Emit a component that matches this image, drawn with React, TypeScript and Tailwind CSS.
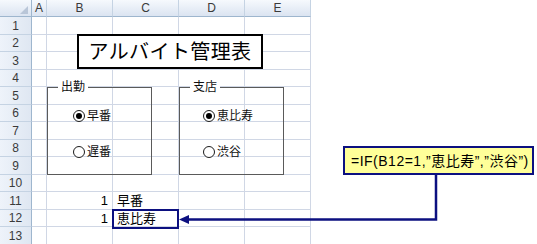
import React from 'react';

const cols = ['A', 'B', 'C', 'D', 'E'];
const rows = Array.from({ length: 13 }, (_, i) => i + 1);

const cellText: Record<string, string> = {
  '11-B': '1',
  '11-C': '早番',
  '12-B': '1',
  '12-C': '恵比寿',
};

const jp = { fontFamily: '"Liberation Sans", "Noto Sans CJK JP", sans-serif' };

const Radio: React.FC<{ label: string; checked?: boolean }> = ({ label, checked }) => (
  <div className="flex h-[14px] items-center gap-[2px] text-[12px] leading-none text-[#111]">
    <span className="flex h-[12px] w-[12px] items-center justify-center rounded-full border-[1.5px] border-[#1c1c1c] bg-white">
      {checked && <span className="h-[6px] w-[6px] rounded-full bg-black" />}
    </span>
    <span>{label}</span>
  </div>
);

const GroupBox: React.FC<{ title: string; options: string[]; left: string; pad: string }> = ({ title, options, left, pad }) => (
  <div className={`absolute top-[87px] h-[88px] w-[105px] border border-[#5a5a5a] ${left}`}>
    <span className="absolute -top-[8px] left-[10px] bg-white px-[3px] text-[12px] leading-[14px] text-[#111]">{title}</span>
    <div className={`flex flex-col gap-[22px] pt-[21px] ${pad}`}>
      {options.map((o, i) => (
        <Radio key={o} label={o} checked={i === 0} />
      ))}
    </div>
  </div>
);

export default function App() {
  return (
    <div className="relative h-[244px] w-[537px] overflow-hidden bg-white" style={jp}>
      <div className="grid w-[311px] grid-cols-[32px_15px_66px_66px_66px_66px] grid-rows-[17px_18px_17px_18px_17px_18px_17px_18px_17px_18px_17px_18px_17px_18px]">
        {/* corner */}
        <div className="relative border-r border-b border-[#9eb6ce] bg-gradient-to-b from-[#f6f9fd] to-[#dbe4f1]">
          <span className="absolute right-[3px] bottom-[2px] h-0 w-0 border-b-[8px] border-l-[8px] border-b-[#b9c6d8] border-l-transparent" />
        </div>
        {cols.map(c => (
          <div
            key={c}
            className="flex items-center justify-center border-r border-b border-r-[#c5d3e3] border-b-[#9eb6ce] bg-gradient-to-b from-[#f6f9fd] to-[#dbe4f1] text-[12px] leading-none text-[#3a3a3a]"
            style={{ fontFamily: '"Liberation Sans", sans-serif' }}
          >
            {c}
          </div>
        ))}
        {rows.map(r => (
          <React.Fragment key={r}>
            <div
              className="flex items-center justify-center border-r border-b border-r-[#9eb6ce] border-b-[#c5d3e3] bg-gradient-to-r from-[#eef3fa] to-[#dfe7f2] text-[12px] leading-none text-[#3a3a3a]"
              style={{ fontFamily: '"Liberation Sans", sans-serif' }}
            >
              {r}
            </div>
            {cols.map(c => {
              const t = cellText[`${r}-${c}`];
              const num = t !== undefined && /^\d+$/.test(t);
              return (
                <div
                  key={c}
                  className={`flex items-center border-r border-b border-[#d0d7e5] px-[4px] text-[13px] leading-none text-black ${num ? 'justify-end' : 'justify-start'}`}
                >
                  {t}
                </div>
              );
            })}
          </React.Fragment>
        ))}
      </div>

      {/* title */}
      <div className="absolute top-[34px] left-[77px] flex h-[35px] w-[186px] items-center justify-center border-2 border-black bg-white text-[20px] leading-none tracking-[0.4px] text-black">
        アルバイト管理表
      </div>

      <GroupBox title="出勤" options={['早番', '遅番']} left="left-[47px]" pad="pl-[25px]" />
      <GroupBox title="支店" options={['恵比寿', '渋谷']} left="left-[179px]" pad="pl-[23px]" />

      {/* active cell */}
      <div className="pointer-events-none absolute top-[209px] left-[112px] h-[20px] w-[67px] border-2 border-[#0c1080]" />

      {/* callout */}
      <svg className="absolute top-0 left-0" width="537" height="244">
        <polyline points="436,174 436,219.5 187,219.5" fill="none" stroke="#0c1080" strokeWidth="2.5" />
        <polygon points="179,219.5 189,215 189,224" fill="#0c1080" />
      </svg>
      <div className="absolute top-[146px] left-[343px] flex h-[29px] w-[191px] items-center border-2 border-[#0c1080] bg-[#ffff99] pl-[6px] text-[14px] leading-none tracking-[0.5px] text-black">
        =IF(B12=1,”恵比寿”,”渋谷”)
      </div>
    </div>
  );
}
